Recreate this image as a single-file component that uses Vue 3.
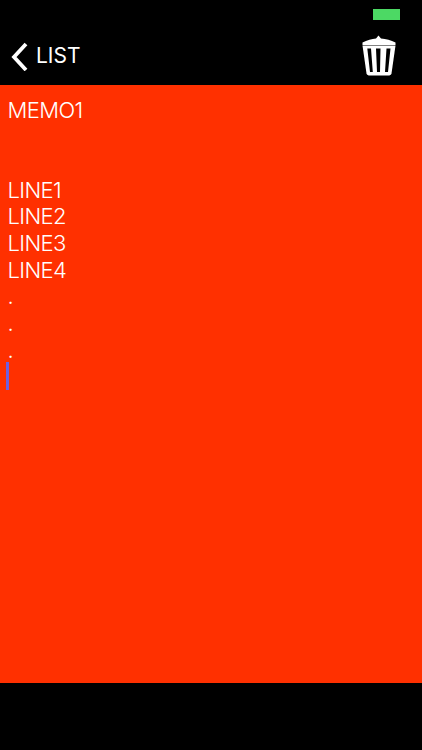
<script setup>
const lines = ['MEMO1', '\u00a0', '\u00a0', 'LINE1', 'LINE2', 'LINE3', 'LINE4', '.', '.', '.']
</script>

<template>
  <div class="screen">
    <div class="status">
      <div class="battery"></div>
    </div>
    <header class="nav">
      <div class="back">
        <svg class="chevron" width="20" height="30" viewBox="0 0 20 30">
          <path d="M17 3 L5 16 L17 29" fill="none" stroke="#fff" stroke-width="3.8" />
        </svg>
        <span class="back-label">LIST</span>
      </div>
      <svg class="trash" width="34" height="41" viewBox="0 0 34 41">
        <path d="M0.5 7.5 C5 5 10 4 14 3.5 L16.5 0.5 L19 3.5 C24 4 29 5 33.5 7.5 L33.5 10 L0.5 10 Z" fill="#fff" />
        <path d="M0.5 10.6 H33.5 L29.5 38.5 C29 40 28 40.5 26 40.5 H8 C6 40.5 5 40 4.5 38.5 Z" fill="#fff" />
        <path d="M5.3 13.5 H9 L10.8 37 H8 Z M14 13.5 H18.5 L18 37 H15 Z M24.5 13.5 H28.5 L26 37 H23 Z" fill="#000" />
      </svg>
    </header>
    <main class="memo">
      <div v-for="(line, i) in lines" :key="i" class="line">{{ line }}</div>
      <div class="caret"></div>
    </main>
    <div class="footer"></div>
  </div>
</template>

<style scoped>
.screen {
  width: 422px;
  height: 750px;
  display: flex;
  flex-direction: column;
  background: #000;
  overflow: hidden;
  font-family: Inter, "Liberation Sans", sans-serif;
  color: #fff;
}
.status {
  height: 28px;
  display: flex;
  justify-content: flex-end;
  align-items: flex-start;
  padding: 9px 22px 0 0;
  box-sizing: border-box;
}
.battery {
  width: 27px;
  height: 11px;
  background: #4cd964;
}
.nav {
  height: 57px;
  display: flex;
  justify-content: space-between;
  align-items: flex-start;
  padding: 0 26px 0 9px;
  box-sizing: border-box;
}
.back {
  display: flex;
  align-items: center;
  gap: 7px;
  height: 30px;
  margin-top: 13px;
}
.chevron {
  display: block;
}
.back-label {
  font-size: 21px;
  line-height: 30px;
}
.trash {
  display: block;
  margin-top: 7px;
}
.memo {
  height: 598px;
  background: #ff3000;
  padding: 11.5px 0 0 7.5px;
  box-sizing: border-box;
  font-size: 22px;
  font-weight: 350;
  line-height: 26.67px;
  letter-spacing: -0.6px;
}
.caret {
  width: 2.5px;
  height: 28px;
  margin: -1.5px 0 0 -1.5px;
  background: #6f5fe0;
}
.footer {
  flex: 1;
}
</style>
